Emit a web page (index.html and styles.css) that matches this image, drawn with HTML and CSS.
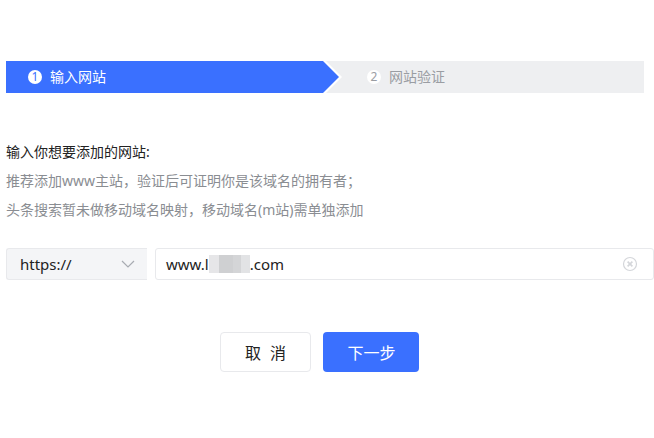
FILE: index.html
```html
<!DOCTYPE html>
<html lang="zh">
<head>
<meta charset="utf-8">
<title>输入网站</title>
<link rel="stylesheet" href="styles.css">
</head>
<body>
<main class="page">
  <div class="steps">
    <div class="step step-active">
      <span class="step-num">1</span>
      <span class="step-label">输入网站</span>
    </div>
    <div class="step step-next">
      <span class="step-num">2</span>
      <span class="step-label">网站验证</span>
    </div>
  </div>
  <section class="intro">
    <p class="intro-title">输入你想要添加的网站:</p>
    <p class="intro-note">推荐添加www主站，验证后可证明你是该域名的拥有者；</p>
    <p class="intro-note">头条搜索暂未做移动域名映射，移动域名(m站)需单独添加</p>
  </section>
  <div class="url-row">
    <div class="select">
      <span>https://</span>
      <svg class="chevron" width="14" height="8" viewBox="0 0 14 8"><path d="M1 1l6 6 6-6" fill="none" stroke="#a8abb2" stroke-width="1.2"/></svg>
    </div>
    <div class="input">
      <span class="value">www.l<span class="mask"><i class="m1"></i><i class="m2"></i><i class="m3"></i><i class="m4"></i></span>.com</span>
      <svg class="clear" width="16" height="16" viewBox="0 0 16 16"><circle cx="8" cy="8" r="6.5" fill="none" stroke="#d4d6da" stroke-width="1.2"/><path d="M5.6 5.6l4.8 4.8M10.4 5.6l-4.8 4.8" fill="none" stroke="#d4d6da" stroke-width="1.6"/></svg>
    </div>
  </div>
  <div class="actions">
    <button class="btn btn-cancel" type="button">取 消</button>
    <button class="btn btn-next" type="button">下一步</button>
  </div>
</main>
</body>
</html>
```
FILE: styles.css
```css
* { box-sizing: border-box; }
html, body { margin: 0; background: #fff; }
body {
  font-family: "Noto Sans", "Noto Sans CJK SC", sans-serif;
  font-size: 14px;
  width: 654px;
  height: 438px;
  overflow: hidden;
}
.page { padding: 61px 0 0 6px; }
.steps {
  display: flex;
  width: 638px;
  height: 32px;
  background: #eeeff1;
}
.step {
  display: flex;
  align-items: center;
  height: 32px;
  line-height: 32px;
}
.step-active {
  width: 333px;
  padding-left: 22px;
  color: #fff;
  background: #3a70ff;
  clip-path: polygon(0 0, 317px 0, 333px 16px, 317px 32px, 0 32px);
  position: relative;
  z-index: 1;
}
.step-next {
  flex: 1;
  margin-left: -4px;
  padding-left: 32px;
  color: #9a9da3;
  background: #eeeff1;
  position: relative;
}
.step-next::before {
  content: "";
  position: absolute;
  left: -13px;
  top: 0;
  width: 20px;
  height: 32px;
  background: #fff;
  clip-path: polygon(0 0, 4px 0, 20px 16px, 4px 32px, 0 32px);
}
.step-num {
  width: 14px;
  height: 14px;
  border-radius: 50%;
  background: #fff;
  color: #3a70ff;
  font-size: 12px;
  line-height: 14px;
  text-align: center;
  margin-right: 8px;
  position: relative;
}
.step-next .step-num { color: #9a9da3; }
.step-label { position: relative; }
.intro { margin-top: 44px; }
.intro p { margin: 0; line-height: 29px; height: 29px; }
.intro-title { color: #222; }
.intro-note { color: #8a8d92; }
.url-row {
  display: flex;
  margin-top: 24px;
  height: 32px;
  gap: 8px;
}
.select {
  width: 141px;
  display: flex;
  align-items: center;
  justify-content: space-between;
  padding: 0 12px 0 13px;
  background: #f4f5f7;
  border: 1px solid #e8e9ec;
  border-right: 0;
  border-radius: 3px 0 0 3px;
  color: #222;
  font-size: 15px;
}
.input {
  flex: 1;
  display: flex;
  align-items: center;
  justify-content: space-between;
  padding: 0 15px 0 10px;
  border: 1px solid #e8e9ec;
  border-radius: 3px;
  color: #222;
  font-size: 15px;
}
.value { display: flex; align-items: center; }
.mask { display: flex; width: 41px; height: 18px; filter: blur(0.6px); }
.mask i { display: block; height: 18px; }
.m1 { width: 10px; background: #e6e6e8; }
.m2 { width: 14px; background: #cfd0d2; }
.m3 { width: 8px; background: #d4d5d7; }
.m4 { width: 9px; background: #e2e3e5; }
.actions {
  display: flex;
  gap: 12px;
  margin: 52px 0 0 214px;
}
.btn {
  height: 40px;
  border-radius: 4px;
  font-family: inherit;
  font-size: 16px;
  padding: 0;
}
.btn-cancel {
  width: 91px;
  background: #fff;
  border: 1px solid #e8e9ec;
  color: #222;
  word-spacing: 5px;
}
.btn-next {
  width: 96px;
  padding-left: 1px;
  background: #3a70ff;
  border: 0;
  color: #fff;
}
```
